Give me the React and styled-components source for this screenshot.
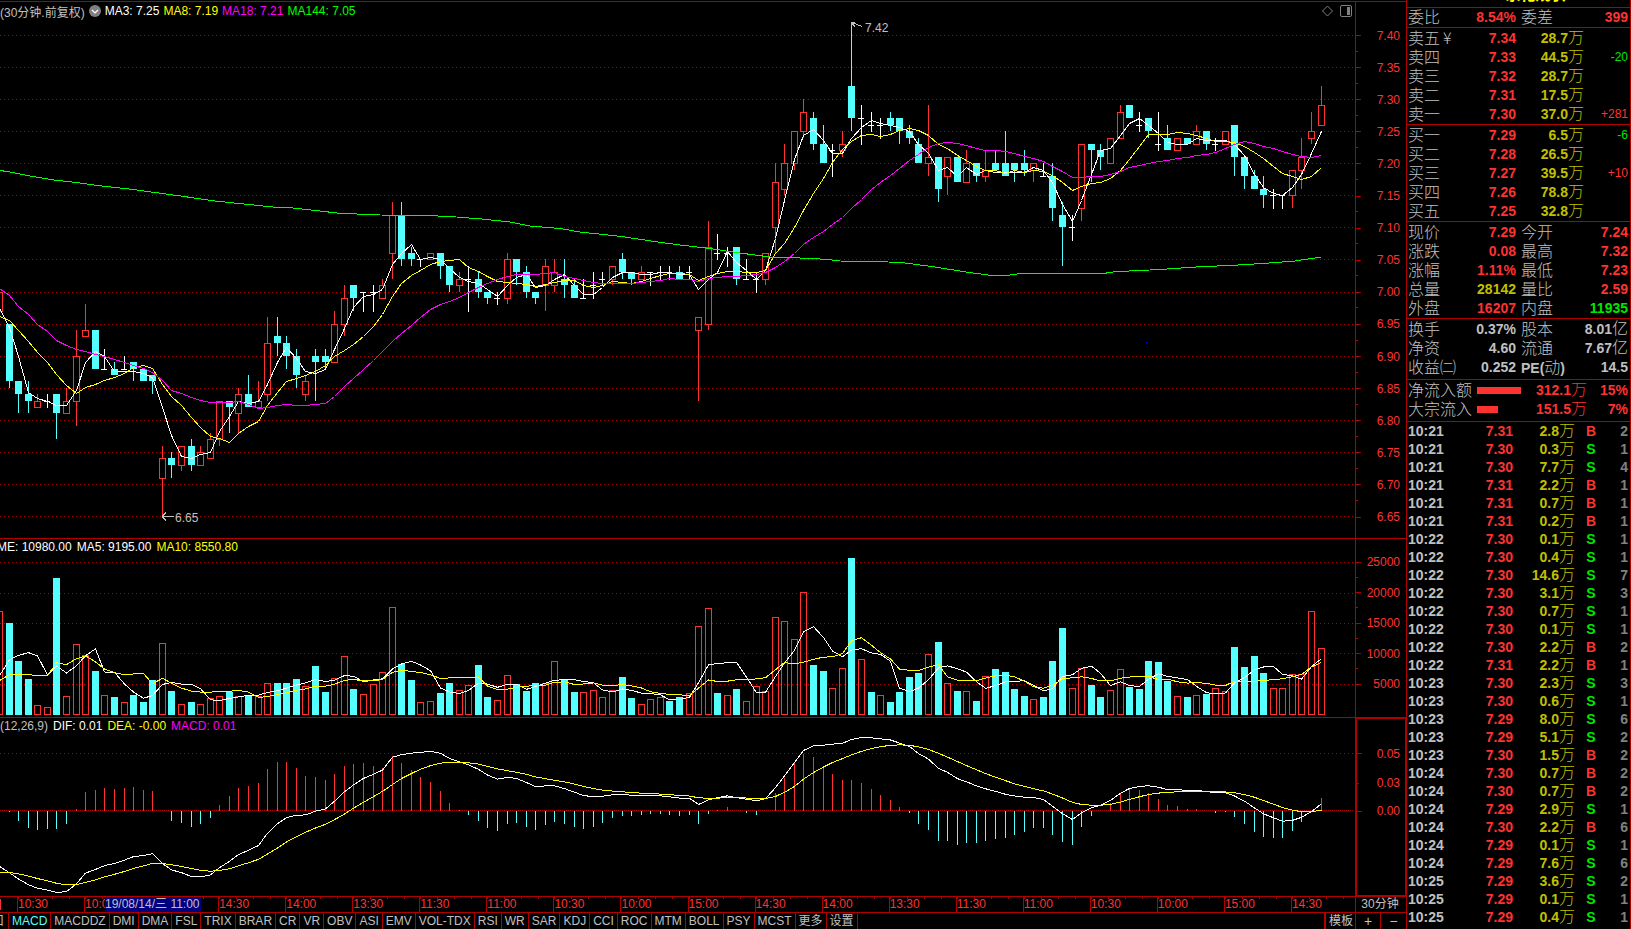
import React from "react";
import styled, { createGlobalStyle } from "styled-components";

const RED = "#ff3232";
const LINE = "#b00000";
const CYAN = "#54ffff";
const GRAY = "#c0c0c0";
const GOLD = "#c0c000";
const GREEN = "#00e600";
const YELLOW = "#ffff00";
const MAGENTA = "#ff00ff";

const GlobalStyle = createGlobalStyle`
  * {
    box-sizing: border-box;
  }
  body {
    margin: 0;
    background: #000;
    color: ${GRAY};
    font-family: "Liberation Sans", "Noto Sans CJK SC", sans-serif;
    font-size: 12px;
    font-weight: 400;
  }
  button {
    font: inherit;
    color: inherit;
    background: none;
    border: 0;
    padding: 0;
    cursor: pointer;
  }
`;

const Page = styled.div`
  display: flex;
  height: 100vh;
  overflow: hidden;
`;

const Main = styled.main`
  flex: 1;
  min-width: 0;
  padding-top: 1px;
  display: grid;
  grid-template-columns: minmax(0, 1fr);
  grid-template-rows: minmax(0, 537fr) minmax(0, 179fr) minmax(0, 179fr) 16px 17px;
`;

const Pane = styled.section`
  display: flex;
  min-height: 0;
  border-top: 1px solid ${LINE};
`;

const PlotColumn = styled.div`
  flex: 1;
  min-width: 0;
  display: flex;
  flex-direction: column;
`;

const Legend = styled.div`
  display: flex;
  align-items: center;
  flex: none;
  gap: ${(props) => props.$gap || 5}px;
  height: ${(props) => props.$height}px;
  padding-right: 3px;
  margin-left: ${(props) => props.$shift || 0}px;
  white-space: nowrap;
`;

const LegendItem = styled.span`
  color: ${(props) => props.$color};
`;

const IconButton = styled.button`
  display: flex;
  flex: none;
`;

const LegendTools = styled.div`
  display: flex;
  gap: 7px;
  margin-left: auto;
`;

const Plot = styled.svg`
  display: block;
  flex: 1;
  min-height: 0;
  width: 100%;
  shape-rendering: crispEdges;
  font-size: 12px;
`;

const AxisLabel = styled.div`
  display: flex;
  align-items: center;
  justify-content: flex-end;
  padding-right: 6px;
  color: ${RED};
  line-height: 12px;
  background-image: linear-gradient(${LINE}, ${LINE}),
    linear-gradient(${LINE}, ${LINE});
  background-repeat: no-repeat;
  background-position: left center, left bottom;
  background-size: ${(props) => (props.$minor ? 2 : 5)}px 1px,
    ${(props) => (props.$half ? 2 : 0)}px 1px;
`;

const Axis = styled.div`
  flex: none;
  width: 51px;
  display: grid;
  grid-template-rows: ${(props) => props.$rows};
  border-left: 1px solid ${LINE};
`;

const BoxedAxis = styled(Axis)`
  margin: -1px 0;
  border: 2px solid ${LINE};
  border-right-width: 1px;
  ${AxisLabel} {
    padding-right: 5px;
  }
`;

const TimeRow = styled.div`
  position: relative;
  display: flex;
  border-top: 1px solid ${LINE};
`;

const TimeScale = styled.div`
  flex: 1;
  min-width: 0;
  position: relative;
  display: grid;
  grid-template-columns: minmax(0, 17fr) repeat(19, minmax(0, 67fr)) minmax(
      0,
      64fr
    );
`;

const TimeCell = styled.div`
  overflow: hidden;
  border-left: 1px solid ${LINE};
  line-height: 15px;
  white-space: nowrap;
  color: ${RED};
  background: repeating-linear-gradient(
      90deg,
      ${LINE} 0 1px,
      transparent 1px 17px
    )
    0 0 / 100% 2px no-repeat;
`;

const TimeEdge = styled.div`
  margin: 2px 0;
  border-left: 1px solid ${RED};
`;

const TimeCursor = styled.div`
  position: absolute;
  left: 105px;
  top: 0;
  padding-right: 1px;
  line-height: 15px;
  background: #000080;
  color: ${GRAY};
`;

const PeriodButton = styled.button`
  width: 51px;
  padding-right: 2px;
  border-left: 1px solid ${LINE};
  line-height: 15px;
`;

const TabRow = styled.nav`
  display: flex;
  border-top: 1px solid ${LINE};
`;

const Tab = styled.button`
  flex: none;
  padding: 0 3px;
  border-right: 1px solid ${LINE};
  line-height: 16px;
  white-space: nowrap;
  color: ${(props) => (props.$active ? CYAN : GRAY)};
`;

const ClippedTab = styled(Tab)`
  display: flex;
  justify-content: flex-end;
  width: 9px;
  padding: 0 4px 0 0;
  overflow: hidden;
`;

const TemplateTab = styled(Tab)`
  width: 32px;
  margin-left: auto;
  border-left: 2px solid ${LINE};
`;

const ZoomTab = styled(Tab)`
  width: 25px;
  font-size: 14px;
  &:last-child {
    border-right: 0;
  }
`;

const Side = styled.aside`
  flex: none;
  width: 225px;
  overflow: hidden;
  border-left: 1px solid ${LINE};
  border-right: 1px solid ${LINE};
`;

const StockName = styled.h1`
  display: flex;
  align-items: flex-end;
  justify-content: center;
  height: 7px;
  margin: 0;
  padding-left: 46px;
  padding-right: 12px;
  overflow: hidden;
  color: ${YELLOW};
  font-size: 15px;
  font-weight: 700;
  line-height: 25px;
`;

const Table = styled.table`
  width: 100%;
  table-layout: fixed;
  border-collapse: separate;
  border-spacing: 0;
  border-top: 1px solid ${LINE};
  padding: ${(props) => props.$pad || "1px 2px 0 1px"};
`;

const Row = styled.tr`
  height: ${(props) => props.$height || 19}px;
  vertical-align: top;
`;

const Name = styled.th`
  padding: 1px 0 0 ${(props) => props.$indent || 0}px;
  color: ${GRAY};
  font-family: "Noto Sans CJK SC", sans-serif;
  font-size: 16px;
  font-weight: 300;
  line-height: 15px;
  text-align: left;
  white-space: nowrap;
`;

const Num = styled.td`
  padding: 1px 0 0;
  color: ${(props) => props.$color || GRAY};
  font-size: 14px;
  font-weight: 700;
  line-height: 17px;
  text-align: ${(props) => props.$align || "right"};
  white-space: nowrap;
`;

const Delta = styled(Num)`
  font-size: 12px;
  font-weight: 400;
`;

const Unit = styled.span`
  font-family: "Noto Sans CJK SC", sans-serif;
  font-size: 16px;
  font-weight: 300;
  line-height: 0;
`;

const Currency = styled.span`
  margin-left: 3px;
`;

const Latin = styled.span`
  font-family: "Liberation Sans", sans-serif;
  font-size: 14px;
  font-weight: 700;
`;

const FlowBar = styled.div`
  height: 7px;
  margin-top: 5px;
  background: ${RED};
`;

// [kind, high, body top, body bottom, low] in cents
const CANDLES = `
u 700 700 697 697|d 695 695 686 685|d 686 686 684 681|d 686 684 683 681
u 684 683 682 682|x 684 683 683 682|d 684 684 681 677|u 685 683 681 681
u 694 690 683 679|u 698 694 693 693|d 694 694 688 688|x 691 688 688 688
d 689 688 687 687|x 690 688 688 688|d 689 689 688 686|d 688 688 686 686
d 687 687 686 684|u 676 674 671 665|d 675 674 673 671|u 676 676 673 672
d 677 676 673 672|u 676 675 673 673|u 678 677 674 674|u 683 683 677 676
d 683 683 682 678|u 685 684 681 678|d 687 684 682 682|u 686 683 682 682
u 696 692 684 683|d 696 693 692 690|d 693 692 690 688|d 691 690 687 685
u 687 686 684 683|d 691 690 689 683|d 691 690 689 688|u 697 695 689 689
u 701 699 695 693|d 701 701 699 697|x 700 700 700 697|x 701 700 700 697
u 702 701 699 699|u 714 712 706 702|d 714 712 705 704|d 707 706 705 704
x 705 705 705 704|u 706 706 705 705|d 706 706 704 702|d 704 704 701 700
u 703 702 701 700|x 704 702 702 697|d 703 702 700 699|d 700 700 699 698
x 700 699 699 698|u 706 705 699 698|d 705 705 703 701|d 704 703 700 699
d 700 700 699 698|u 705 704 701 697|u 705 703 701 700|d 705 702 701 699
d 702 701 699 699|x 702 699 699 699|x 703 701 701 699|x 703 702 702 701
u 704 704 702 701|d 706 705 703 702|d 703 703 702 701|u 704 703 702 702
x 703 703 703 701|x 704 703 703 702|y 704 703 703 702|d 704 703 702 702
x 704 703 703 702|u 696 696 694 683|u 711 707 695 694|y 709 706 706 705
x 707 706 706 704|d 707 707 702 701|x 705 702 702 702|x 703 702 702 700
u 706 706 702 701|u 720 717 710 706|u 723 720 716 715|u 725 725 720 719
u 730 728 725 724|d 728 727 723 722|d 726 723 720 720|x 723 722 722 718
u 725 723 722 721|d 742 732 727 725|x 729 727 727 723|y 728 726 726 725
x 727 726 726 724|d 728 727 726 725|d 727 727 725 723|d 726 725 724 723
d 724 723 720 720|u 729 721 720 718|d 721 721 716 714|u 721 721 718 715
d 721 721 717 717|u 722 720 717 717|d 720 720 718 717|u 722 719 718 717
d 722 720 719 719|d 725 720 718 718|d 720 720 719 717|d 722 720 719 718
u 720 720 719 717|y 720 718 718 718|d 720 718 713 711|d 714 712 710 704
x 712 710 710 708|u 723 723 713 711|d 723 723 722 717|d 723 722 721 719
u 724 724 720 720|u 729 728 724 724|d 729 729 727 727|y 728 726 726 725
d 727 727 725 724|y 728 723 723 722|d 726 724 722 722|u 724 724 722 722
d 724 724 723 723|u 726 725 723 723|d 725 725 723 722|x 724 723 723 722
u 725 725 723 723|d 726 726 721 718|d 721 721 718 716|d 719 718 716 716
d 718 716 715 713|x 716 715 715 713|x 715 715 715 713|u 719 719 715 713
u 724 721 719 716|u 728 725 724 723|u 732 729 726 726`
  .trim()
  .split(/[|\n]/)
  .map((entry) => {
    const [kind, ...prices] = entry.split(" ");
    const [high, top, bottom, low] = prices.map(Number);
    return { kind, high, top, bottom, low, close: kind === "u" ? top : bottom };
  });

// one unit is 54.7 lots, three units to a pixel
const VOLUMES = [
  313, 275, 161, 107, 31, 25, 410, 58, 214, 181, 131, 61, 53, 40, 59, 38, 104,
  217, 71, 34, 38, 34, 52, 58, 68, 58, 59, 56, 97, 95, 95, 107, 88, 146, 68,
  112, 178, 77, 64, 94, 130, 325, 152, 104, 40, 43, 65, 95, 76, 91, 149, 53,
  46, 121, 94, 71, 95, 97, 163, 106, 68, 70, 76, 55, 76, 113, 50, 34, 49, 55,
  41, 53, 67, 268, 322, 65, 61, 77, 43, 88, 73, 295, 283, 229, 370, 149, 131,
  82, 142, 470, 169, 68, 61, 38, 68, 113, 125, 184, 218, 97, 71, 73, 41, 118,
  137, 128, 77, 56, 49, 53, 161, 260, 82, 142, 89, 53, 76, 139, 83, 77, 161,
  158, 101, 58, 53, 61, 62, 82, 73, 203, 143, 176, 125, 82, 82, 124, 124, 313,
  202,
];

const MACD = [
  36, -2, -31, -52, -58, -55, -55, -40, 6, 56, 62, 68, 65, 68, 71, 62, 59, 0,
  -31, -37, -49, -40, -22, 17, 44, 68, 74, 83, 125, 146, 146, 128, 104, 101,
  92, 110, 134, 140, 143, 134, 128, 164, 143, 122, 101, 86, 59, 23, 2, -13,
  -31, -52, -61, -40, -37, -49, -58, -43, -34, -40, -49, -55, -49, -37, -22,
  -16, -16, -13, -10, -10, -13, -16, -13, -40, -10, 3, 11, 0, -7, -13, 0, 53,
  98, 143, 172, 161, 131, 110, 92, 92, 83, 65, 47, 32, 11, -7, -40, -58, -91,
  -91, -103, -97, -97, -91, -85, -82, -73, -64, -52, -52, -73, -94, -103, -49,
  -16, 0, 23, 53, 65, 62, 53, 35, 17, 14, 5, 5, 0, -7, -4, -19, -40, -64, -79,
  -82, -82, -61, -34, 0, 38,
];

const MA144 =
  "0,150.5 9,151.8 18,153.6 33,156.6 55,160.1 76,162.5 104,166.3 133,169.4 152,172.1 180,175.9 213,180.8 243,183.9 273,187 293,188 340,193.3 380,195 420,195.3 450,196.5 482,199 510,202 530,206 560,208.5 580,212 620,216.3 640,219.3 660,222.3 680,225 708,228.3 740,233 770,237 800,238 826,239.3 840,241 880,241.5 905,243 935,247 966,252 990,255.3 1008,255.3 1020,253.5 1104,253.4 1115,251.7 1160,249.5 1200,246.7 1230,245.5 1265,243.3 1295,241 1310,238.7 1321,237.3";

const colX = (i) => Math.floor(9.577 * i - 0.48);
const priceY = (cents) => Math.floor(15.4 + (740 - cents) * 6.416);

// moving average; lead holds the values that need bars left of the window
const average = (values, span, lead) =>
  values.map((_, i) => {
    if (i < lead.length) return lead[i];
    const part = values.slice(i - span + 1, i + 1);
    return part.reduce((sum, v) => sum + v, 0) / span;
  });

const toPoints = (values, scale) =>
  values.map((v, i) => `${colX(i) + 0.5},${scale(v)}`).join(" ");

const closes = CANDLES.map((c) => c.close);
const MA3 = average(closes, 3, [697.4, 694.5]);
const MA8 = average(closes, 8, [696.2, 695.5, 694, 692.3, 690.6, 689, 687.2]);
const MA18 = average(closes, 18, [
  700.5, 699.4, 697.8, 696.5, 695, 693.8, 692.5, 691.6, 691, 690.7, 690.3,
  689.9, 689.5, 689, 688.6, 688.1, 687.5,
]);
const VMA5 = average(VOLUMES, 5, [118, 166, 179, 187]);
const VMA10 = average(
  VOLUMES,
  10,
  [103, 121, 121, 121, 118, 118, 157, 151, 169]
);

const DEA = [];
MACD.reduce((prev, h) => {
  const next = prev + (h < 0 ? h - 1.5 : h) / 8;
  DEA.push(next);
  return next;
}, -190);
const DIF = DEA.map((v, i) => v + MACD[i] / 2);

const GridLine = ({ y, step = 4 }) => (
  <line
    x1="0"
    x2="1354"
    y1={y + 0.5}
    y2={y + 0.5}
    stroke={LINE}
    strokeDasharray={`1 ${step - 1}`}
  />
);

const Curve = ({ points, color }) => (
  <polyline points={points} fill="none" stroke={color} strokeWidth="1" />
);

const Candle = ({ candle, x }) => {
  const { kind, high, top, bottom, low } = candle;
  const [yh, yt, yb, yl] = [high, top, bottom, low].map(priceY);
  if (kind === "u") {
    return (
      <g stroke={RED} fill="none">
        <path d={`M${x + 0.5} ${yh}V${yt}M${x + 0.5} ${yb}V${yl}`} />
        <rect x={x - 2.5} y={yt + 0.5} width="6" height={yb - yt} />
      </g>
    );
  }
  if (kind === "d") {
    return (
      <g fill={CYAN}>
        <rect x={x} y={yh} width="1" height={yl - yh} />
        <rect x={x - 3} y={yt} width="7" height={yb - yt} />
      </g>
    );
  }
  return (
    <g fill="#fff">
      <rect x={x} y={yh} width="1" height={yl - yh + 1} />
      <rect x={x - 3} y={yt} width="6" height="1" />
    </g>
  );
};

const VolumeBar = ({ kind, value, x }) => {
  const y = Math.round(160 - value / 3);
  if (kind === "d" || kind === "y") {
    return <rect x={x - 3} y={y} width="7" height={160 - y} fill={CYAN} />;
  }
  return (
    <rect
      x={x - 2.5}
      y={y + 0.5}
      width="6"
      height={159 - y}
      fill="none"
      stroke={RED}
    />
  );
};

const PriceChart = () => (
  <Plot viewBox="0 0 1355 518" preserveAspectRatio="none">
    {Array.from({ length: 16 }, (_, i) => (
      <GridLine key={i} y={priceY(740 - i * 5)} />
    ))}
    {CANDLES.map((candle, i) => (
      <Candle key={i} candle={candle} x={colX(i)} />
    ))}
    <Curve points={toPoints(MA3, (v) => priceY(v) + 0.5)} color="#fff" />
    <Curve points={toPoints(MA8, (v) => priceY(v) + 0.5)} color={YELLOW} />
    <Curve points={toPoints(MA18, (v) => priceY(v) + 0.5)} color={MAGENTA} />
    <Curve points={MA144} color="#00ff00" />
    <g fill="none" stroke={GRAY}>
      <path d="M851.5 6V2.5H855M851.5 2.5L862.5 6.5M852 3L855 7" />
      <path d="M162 496.5H174M162 496.5L166 492.5M162 496.5L166 500.5" />
    </g>
    <g fill={GRAY}>
      <text x="865" y="12">
        7.42
      </text>
      <text x="175" y="502">
        6.65
      </text>
    </g>
    <circle cx="1146.5" cy="322.5" r="1" fill="#0000ff" />
  </Plot>
);

const VolumeChart = () => (
  <Plot viewBox="0 0 1355 162" preserveAspectRatio="none">
    {[7, 38, 68, 98, 129].map((y) => (
      <GridLine key={y} y={y} />
    ))}
    {VOLUMES.map((value, i) => (
      <VolumeBar key={i} kind={CANDLES[i].kind} value={value} x={colX(i)} />
    ))}
    <Curve points={toPoints(VMA5, (v) => 160 - v / 3)} color="#fff" />
    <Curve points={toPoints(VMA10, (v) => 160 - v / 3)} color={YELLOW} />
  </Plot>
);

const MacdChart = () => (
  <Plot viewBox="0 0 1355 162" preserveAspectRatio="none">
    <GridLine y={19} />
    <GridLine y={76} step={2} />
    {MACD.map((h, i) => {
      const size = Math.round(Math.abs(h) / 3);
      if (size === 0) return null;
      return (
        <rect
          key={i}
          x={colX(i)}
          y={h > 0 ? 77 - size : 77}
          width="1"
          height={size}
          fill={h > 0 ? RED : CYAN}
        />
      );
    })}
    <Curve points={toPoints(DIF, (v) => 76.5 - v / 3)} color="#fff" />
    <Curve points={toPoints(DEA, (v) => 76.5 - v / 3)} color={YELLOW} />
  </Plot>
);

// the third slot sits under the cursor label
const TIMES = [
  "10:30",
  "10:00",
  "",
  "14:30",
  "14:00",
  "13:30",
  "11:30",
  "11:00",
  "10:30",
  "10:00",
  "15:00",
  "14:30",
  "14:00",
  "13:30",
  "11:30",
  "11:00",
  "10:30",
  "10:00",
  "15:00",
  "14:30",
];

const TABS =
  "MACD MACDDZ DMI DMA FSL TRIX BRAR CR VR OBV ASI EMV VOL-TDX RSI WR SAR KDJ CCI ROC MTM BOLL PSY MCST 更多 设置".split(
    " "
  );

const ORDERS = {
  sell: [
    ["卖五", "7.34", "28.7", ""],
    ["卖四", "7.33", "44.5", "-20"],
    ["卖三", "7.32", "28.7", ""],
    ["卖二", "7.31", "17.5", ""],
    ["卖一", "7.30", "37.0", "+281"],
  ],
  buy: [
    ["买一", "7.29", "6.5", "-6"],
    ["买二", "7.28", "26.5", ""],
    ["买三", "7.27", "39.5", "+10"],
    ["买四", "7.26", "78.8", ""],
    ["买五", "7.25", "32.8", ""],
  ],
};

const QUOTES = [
  ["现价", "7.29", RED, "今开", "7.24", RED],
  ["涨跌", "0.08", RED, "最高", "7.32", RED],
  ["涨幅", "1.11%", RED, "最低", "7.23", RED],
  ["总量", "28142", GOLD, "量比", "2.59", RED],
  ["外盘", "16207", RED, "内盘", "11935", GREEN],
];

const FUNDAMENTALS = [
  ["换手", "0.37%", GRAY, "股本", "8.01亿", GRAY],
  ["净资", "4.60", GRAY, "流通", "7.67亿", GRAY],
  ["收益㈡", "0.252", GRAY, "PE(动)", "14.5", GRAY],
];

const FLOWS = [
  ["净流入额", 44, "312.1", "15%"],
  ["大宗流入", 21, "151.5", "7%"],
];

const TICKS = `
10:21 7.31 2.8 B 2|10:21 7.30 0.3 S 1|10:21 7.30 7.7 S 4|10:21 7.31 2.2 B 1
10:21 7.31 0.7 B 1|10:21 7.31 0.2 B 1|10:22 7.30 0.1 S 1|10:22 7.30 0.4 S 1
10:22 7.30 14.6 S 7|10:22 7.30 3.1 S 3|10:22 7.30 0.7 S 1|10:22 7.30 0.1 S 1
10:22 7.30 2.2 B 2|10:22 7.31 2.2 B 1|10:23 7.30 2.3 S 3|10:23 7.30 0.6 S 1
10:23 7.29 8.0 S 6|10:23 7.29 5.1 S 2|10:23 7.30 1.5 B 2|10:24 7.30 0.7 B 2
10:24 7.30 0.7 B 2|10:24 7.29 2.9 S 1|10:24 7.30 2.2 B 6|10:24 7.29 0.1 S 1
10:24 7.29 7.6 S 6|10:25 7.29 3.6 S 2|10:25 7.29 0.1 S 1|10:25 7.29 0.4 S 1`
  .trim()
  .split(/[|\n]/)
  .map((entry) => entry.split(" "));

const Columns = ({ widths }) => (
  <colgroup>
    {widths.map((w, i) => (
      <col key={i} width={w} />
    ))}
  </colgroup>
);

// splits a trailing 万 / 亿 off the figure
const Figure = ({ text }) => {
  const unit = text.match(/[万亿]$/);
  return unit ? (
    <>
      {text.slice(0, -1)}
      <Unit>{unit[0]}</Unit>
    </>
  ) : (
    text
  );
};

const OrderTable = ({ orders }) => (
  <Table>
    <Columns widths={["61", "47", "68"]} />
    <tbody>
      {orders.map(([name, price, amount, delta]) => (
        <Row key={name}>
          <Name scope="row">
            {name}
            {name === "卖五" && <Currency>¥</Currency>}
          </Name>
          <Num $color={RED}>{price}</Num>
          <Num $color={GOLD}>
            <Figure text={`${amount}万`} />
          </Num>
          <Delta $color={delta.startsWith("-") ? GREEN : RED}>{delta}</Delta>
        </Row>
      ))}
    </tbody>
  </Table>
);

const StatTable = ({ rows, pad }) => (
  <Table $pad={pad}>
    <Columns widths={["55", "53", "52"]} />
    <tbody>
      {rows.map(([left, value, color, right, other, otherColor]) => (
        <Row key={left}>
          <Name scope="row">{left}</Name>
          <Num $color={color}>{value}</Num>
          <Name scope="row" $indent={5}>
            {right === "PE(动)" ? (
              <>
                <Latin>PE(</Latin>动<Latin>)</Latin>
              </>
            ) : (
              right
            )}
          </Name>
          <Num $color={otherColor}>
            <Figure text={other} />
          </Num>
        </Row>
      ))}
    </tbody>
  </Table>
);

const QuotePanel = () => (
  <Side>
    <StockName>永化规状</StockName>
    <StatTable
      rows={[["委比", "8.54%", RED, "委差", "399", RED]]}
      pad="0 2px 0 1px"
    />
    <OrderTable orders={ORDERS.sell} />
    <OrderTable orders={ORDERS.buy} />
    <StatTable rows={QUOTES} />
    <StatTable rows={FUNDAMENTALS} pad="1px 2px 2px 1px" />
    <Table $pad="1px 2px 2px 1px">
      <Columns widths={["69", "44", "66"]} />
      <tbody>
        {FLOWS.map(([name, width, amount, percent]) => (
          <Row key={name}>
            <Name scope="row">{name}</Name>
            <Num>
              <FlowBar style={{ width }} />
            </Num>
            <Num $color={RED}>
              <Figure text={`${amount}万`} />
            </Num>
            <Num $color={RED}>{percent}</Num>
          </Row>
        ))}
      </tbody>
    </Table>
    <Table $pad="0 2px 0 1px">
      <Columns widths={["51", "54", "62", "32"]} />
      <tbody>
        {TICKS.map(([time, price, amount, side, count], i) => (
          <Row key={i} $height={18}>
            <Num $align="left">{time}</Num>
            <Num $color={RED}>{price}</Num>
            <Num $color={GOLD}>
              <Figure text={`${amount}万`} />
            </Num>
            <Num $align="center" $color={side === "B" ? RED : GREEN}>
              {side}
            </Num>
            <Num $color="#808080">{count}</Num>
          </Row>
        ))}
      </tbody>
    </Table>
  </Side>
);

const App = () => (
  <Page>
    <GlobalStyle />
    <Main>
      <Pane>
        <PlotColumn>
          <Legend $height={18} $gap={4}>
            <span>(30分钟.前复权)</span>
            <IconButton aria-label="指标菜单">
              <svg width="12" height="12" viewBox="0 0 12 12">
                <circle cx="6" cy="6" r="6" fill="#808080" />
                <path
                  d="M3 5l3 3 3-3"
                  fill="none"
                  stroke="#fff"
                  strokeWidth="1.2"
                />
              </svg>
            </IconButton>
            <LegendItem $color="#fff">MA3: 7.25</LegendItem>
            <LegendItem $color={YELLOW}>MA8: 7.19</LegendItem>
            <LegendItem $color={MAGENTA}>MA18: 7.21</LegendItem>
            <LegendItem $color="#00ff00">MA144: 7.05</LegendItem>
            <LegendTools>
              <IconButton aria-label="标记">
                <svg width="11" height="12" viewBox="0 0 11 12">
                  <path
                    d="M5.5 1l5 5-5 5-5-5z"
                    fill="none"
                    stroke="#808080"
                  />
                </svg>
              </IconButton>
              <IconButton aria-label="侧栏">
                <svg width="12" height="12" viewBox="0 0 12 12">
                  <rect
                    x="0.5"
                    y="0.5"
                    width="11"
                    height="11"
                    rx="1.5"
                    fill="none"
                    stroke="#808080"
                  />
                  <rect x="7" y="2" width="3" height="8" fill="#808080" />
                </svg>
              </IconButton>
            </LegendTools>
          </Legend>
          <PriceChart />
        </PlotColumn>
        <Axis $rows="175fr repeat(16, 321fr) 49fr">
          <span />
          {Array.from({ length: 16 }, (_, i) => (
            <AxisLabel key={i} $half={i < 15}>
              {(7.4 - i * 0.05).toFixed(2)}
            </AxisLabel>
          ))}
        </Axis>
      </Pane>
      <Pane>
        <PlotColumn>
          <Legend $height={16} $shift={-3}>
            <LegendItem $color="#fff">ME: 10980.00</LegendItem>
            <LegendItem $color="#fff">MA5: 9195.00</LegendItem>
            <LegendItem $color={YELLOW}>MA10: 8550.80</LegendItem>
          </Legend>
          <VolumeChart />
        </PlotColumn>
        <Axis $rows="83fr repeat(5, 304fr) 177fr">
          <span />
          {[25000, 20000, 15000, 10000, 5000].map((v) => (
            <AxisLabel key={v} $half={v > 5000}>
              {v}
            </AxisLabel>
          ))}
        </Axis>
      </Pane>
      <Pane>
        <PlotColumn>
          <Legend $height={16}>
            <span>(12,26,9)</span>
            <LegendItem $color="#fff">DIF: 0.01</LegendItem>
            <LegendItem $color={YELLOW}>DEA: -0.00</LegendItem>
            <LegendItem $color={MAGENTA}>MACD: 0.01</LegendItem>
          </Legend>
          <MacdChart />
        </PlotColumn>
        <BoxedAxis $rows="20fr 29fr 30fr 26fr 71fr">
          <span />
          <AxisLabel>0.05</AxisLabel>
          <AxisLabel $minor>0.03</AxisLabel>
          <AxisLabel>0.00</AxisLabel>
        </BoxedAxis>
      </Pane>
      <TimeRow>
        <TimeScale>
          <TimeEdge />
          {TIMES.map((time, i) => (
            <TimeCell key={i}>{time}</TimeCell>
          ))}
          <TimeCursor>19/08/14/三 11:00</TimeCursor>
        </TimeScale>
        <PeriodButton>30分钟</PeriodButton>
      </TimeRow>
      <TabRow>
        <ClippedTab>窗口</ClippedTab>
        {TABS.map((tab) => (
          <Tab key={tab} $active={tab === "MACD"}>
            {tab}
          </Tab>
        ))}
        <TemplateTab>模板</TemplateTab>
        <ZoomTab aria-label="放大">+</ZoomTab>
        <ZoomTab aria-label="缩小">−</ZoomTab>
      </TabRow>
    </Main>
    <QuotePanel />
  </Page>
);

export default App;
